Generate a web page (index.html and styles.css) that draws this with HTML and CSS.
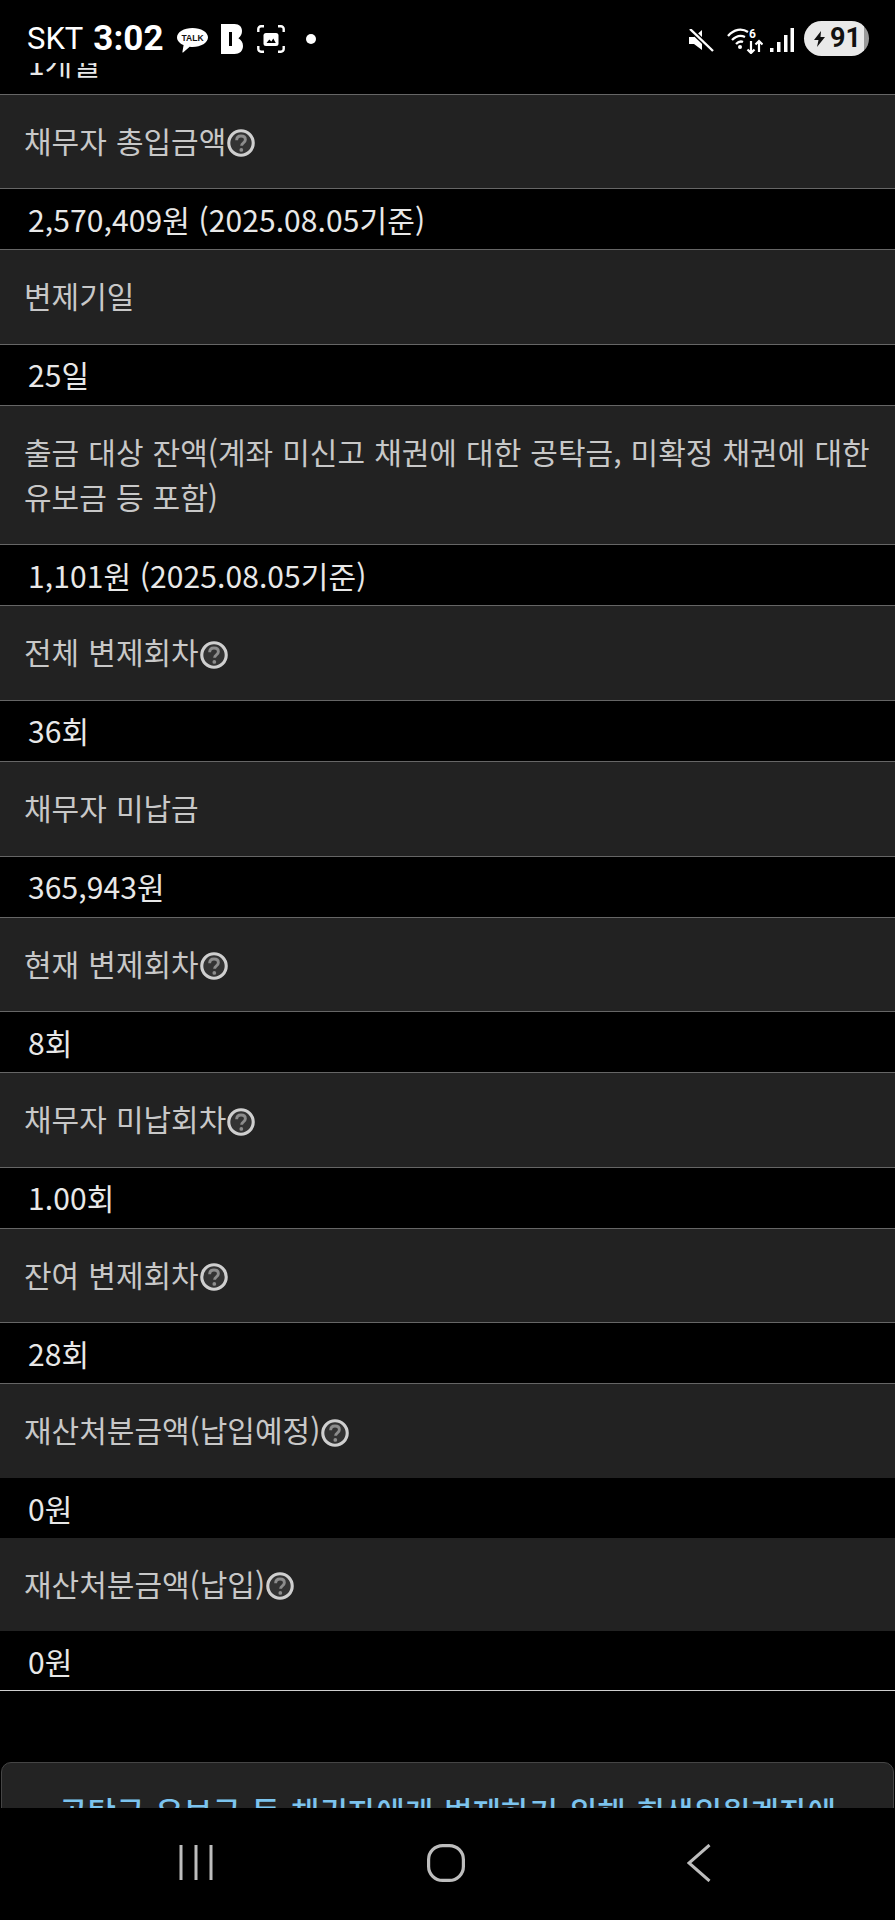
FILE: index.html
```html
<!DOCTYPE html>
<html lang="ko">
<head>
<meta charset="utf-8">
<title>변제 정보</title>
<link rel="stylesheet" href="styles.css">
</head>
<body>
<svg class="defs" width="0" height="0" aria-hidden="true">
  <symbol id="help" viewBox="0 0 27 27">
    <circle cx="13.5" cy="13.5" r="11.800" fill="#333" stroke="#cfcfcf" stroke-width="3"/>
    <path d="M9.300 10.800c0-2.500 1.800-4 4.200-4 2.500 0 4.200 1.400 4.200 3.500 0 1.700-1 2.500-2.100 3.300-1.100.8-1.500 1.300-1.500 2.600" fill="none" stroke="#8c8c8c" stroke-width="2.800"/>
    <circle cx="13.800" cy="20.200" r="1.800" fill="#8c8c8c"/>
  </symbol>
</svg>
<div class="phone">
  <header class="status">
    <span class="carrier">SKT</span>
    <span class="clock">3:02</span>
    <svg class="ic-talk" viewBox="0 0 31 25" aria-hidden="true">
      <path d="M15.5 0C7 0 0 4.1 0 9.3c0 3.4 2.6 6.2 6.6 7.8L5.4 24c-.1.5.3.7.7.4l6.6-5.6c.9.1 1.9.2 2.8.2 8.5 0 15.5-4.3 15.5-9.7C31 4.1 24 0 15.5 0z" fill="#fff"/>
      <text x="15.5" y="13" class="talk-text">TALK</text>
    </svg>
    <svg class="ic-b" viewBox="0 0 22 30" aria-hidden="true">
      <path d="M0 0h13.5C18.5 0 21 3 21 7c0 3-1.2 5.500-3.600 7.200C20.300 15.800 22 18.500 22 22c0 5-3.500 8-8.500 8H0z" fill="#fff"/>
      <rect x="8" y="8" width="3" height="14" fill="#000"/>
    </svg>
    <svg class="ic-shot" viewBox="0 0 28 28" aria-hidden="true">
      <path d="M1.300 7V4a2.700 2.700 0 0 1 2.700-2.700h3M21 1.300h3A2.700 2.700 0 0 1 26.700 4v3M26.700 21v3a2.700 2.700 0 0 1-2.700 2.700h-3M7 26.700H4A2.700 2.700 0 0 1 1.300 24v-3" fill="none" stroke="#fff" stroke-width="2.400"/>
      <rect x="6.500" y="8" width="15" height="13" rx="2.500" fill="#fff"/>
      <path d="M9.500 18l2.800-3.500 2 2 2-3 2.500 4.500z" fill="#000"/>
    </svg>
    <span class="dot"></span>
    <div class="status-right">
      <svg class="ic-mute" viewBox="0 0 25 23" aria-hidden="true">
        <path d="M0 7h5l8-7v20l-8-6H0z" fill="#fff" transform="translate(0 1)"/>
        <path d="M2 1l22 21" stroke="#000" stroke-width="5"/>
        <path d="M1 0l23 22" stroke="#fff" stroke-width="2.400"/>
      </svg>
      <svg class="ic-wifi" viewBox="0 0 36 27" aria-hidden="true">
        <g fill="none" stroke="#fff" stroke-width="2.300">
          <path d="M1 9C7 2 15 1 21 5"/>
          <path d="M5 13c4-4 9-5 13-3"/>
          <path d="M9 17c2-2 5-3 7-2"/>
        </g>
        <circle cx="13" cy="20" r="2" fill="#fff"/>
        <text x="22" y="10.500" class="wifi-six">6</text>
        <path d="M24 14v12M20.500 22.500l3.500 3.500 3.500-3.500M32 25V14M28.500 17.500L32 14l3.500 3.500" fill="none" stroke="#fff" stroke-width="2.200"/>
      </svg>
      <svg class="ic-signal" viewBox="0 0 24 24" aria-hidden="true">
        <rect x="0" y="20" width="3.500" height="4" fill="#fff"/>
        <rect x="7" y="14" width="3.500" height="10" fill="#fff"/>
        <rect x="14" y="7" width="3.500" height="17" fill="#fff"/>
        <rect x="20.500" y="0" width="3.500" height="24" fill="#fff"/>
      </svg>
      <div class="battery">
        <svg class="ic-bolt" viewBox="0 0 13 16" aria-hidden="true"><path d="M8 0L1 9h4.500L4 16l8-10H7.500z" fill="#111"/></svg>
        <span class="battery-num">91</span>
      </div>
    </div>
  </header>

  <main class="content">
    <div class="td partial">1개월</div>

    <div class="th line">채무자 총입금액<svg class="help"><use href="#help"/></svg></div>
    <div class="td line">2,570,409원 (2025.08.05기준)</div>

    <div class="th line">변제기일</div>
    <div class="td line">25일</div>

    <div class="th line">출금 대상 잔액(계좌 미신고 채권에 대한 공탁금, 미확정 채권에 대한 유보금 등 포함)</div>
    <div class="td line">1,101원 (2025.08.05기준)</div>

    <div class="th line">전체 변제회차<svg class="help"><use href="#help"/></svg></div>
    <div class="td line">36회</div>

    <div class="th line">채무자 미납금</div>
    <div class="td line">365,943원</div>

    <div class="th line">현재 변제회차<svg class="help"><use href="#help"/></svg></div>
    <div class="td line">8회</div>

    <div class="th line">채무자 미납회차<svg class="help"><use href="#help"/></svg></div>
    <div class="td line">1.00회</div>

    <div class="th line">잔여 변제회차<svg class="help"><use href="#help"/></svg></div>
    <div class="td line">28회</div>

    <div class="th line">재산처분금액(납입예정)<svg class="help"><use href="#help"/></svg></div>
    <div class="td">0원</div>

    <div class="th">재산처분금액(납입)<svg class="help"><use href="#help"/></svg></div>
    <div class="td last">0원</div>

    <section class="notice">공탁금 유보금 등 채권자에게 변제하기 위해 회생위원계좌에</section>
  </main>

  <nav class="navbar">
    <svg class="ic-recent" viewBox="0 0 36 37" aria-hidden="true">
      <path d="M3 1v35M18 1v35M33 1v35" stroke="#bdbdbd" stroke-width="3" fill="none"/>
    </svg>
    <svg class="ic-home" viewBox="0 0 38 38" aria-hidden="true">
      <rect x="1.600" y="1.600" width="34.800" height="34.800" rx="14" fill="none" stroke="#bdbdbd" stroke-width="3.200"/>
    </svg>
    <svg class="ic-back" viewBox="0 0 24 38" aria-hidden="true">
      <path d="M22.500 1L2 19l20.500 18" fill="none" stroke="#bdbdbd" stroke-width="3"/>
    </svg>
  </nav>
</div>
</body>
</html>
```
FILE: styles.css
```css
* { box-sizing: border-box; }
html, body { margin: 0; padding: 0; background: #000; }
.defs { display: block; height: 0; }
.phone {
  width: 895px;
  height: 1920px;
  display: flex;
  flex-direction: column;
  overflow: hidden;
  background: #000;
  font-family: "Noto Sans CJK KR", "Noto Sans", sans-serif;
}
.status {
  height: 63px;
  flex: none;
  display: flex;
  align-items: flex-start;
  padding: 0 26px 0 27px;
  color: #fff;
  font-family: Roboto, "Liberation Sans", sans-serif;
}
.carrier { font-size: 31px; line-height: 36px; margin-top: 21px; }
.clock { font-size: 35px; line-height: 36px; margin: 21px 0 0 10px; font-weight: 700; }
.ic-talk { width: 31px; height: 25px; margin: 28px 0 0 14px; }
.talk-text { font: 700 8.500px "Liberation Sans", sans-serif; text-anchor: middle; fill: #111; }
.ic-b { width: 22px; height: 30px; margin: 24px 0 0 13px; }
.ic-shot { width: 28px; height: 28px; margin: 25px 0 0 14px; }
.dot { width: 10px; height: 10px; border-radius: 50%; background: #fff; margin: 34px 0 0 21px; }
.status-right { margin-left: auto; display: flex; align-items: flex-start; }
.ic-mute { width: 25px; height: 23px; margin-top: 29px; }
.ic-wifi { width: 36px; height: 27px; margin: 27px 0 0 13px; }
.wifi-six { font: 700 12px Roboto, sans-serif; fill: #fff; }
.ic-signal { width: 24px; height: 24px; margin: 28px 0 0 7px; }
.battery {
  width: 65px;
  height: 35px;
  margin: 21px 0 0 10px;
  border-radius: 18px;
  display: flex;
  align-items: center;
  padding-left: 9px;
  background: linear-gradient(90deg, #e9e9e9 0, #e9e9e9 92%, #9a9a9a 92%, #9a9a9a 100%);
}
.ic-bolt { width: 13px; height: 16px; }
.battery-num { font-size: 27px; line-height: 35px; font-weight: 700; color: #111; margin-left: 4px; }

.content {
  flex: 1;
  min-height: 0;
  overflow: hidden;
  font-size: 30px;
}
.th {
  min-height: 93.300px;
  padding: 23px 15px 25px 24px;
  line-height: 45.300px;
  background: #222;
  color: #c8c8c8;
  word-spacing: 0.7px;
}
.td {
  height: 59.800px;
  padding: 7.500px 0 0 28px;
  line-height: 45px;
  color: #e8e8e8;
  letter-spacing: 0.1px;
}
.line { border-top: 1.330px solid #666; }
.line.th { min-height: 94.630px; }
.line.td { height: 61px; }
.partial {
  height: 30.500px;
  padding: 0 0 9px 28px;
  display: flex;
  align-items: flex-end;
  overflow: hidden;
}
.last { border-bottom: 1.330px solid #d0d0d0; height: 60px; }
.help {
  width: 28px;
  height: 28px;
  vertical-align: -4.500px;
  margin-left: 1px;
}
.notice {
  margin: 71px 1px 0;
  height: 200px;
  padding: 25px 0;
  background: #232323;
  border: 1.500px solid #454545;
  border-radius: 10px;
  text-align: center;
  color: #7cc4ee;
  font-weight: 500;
  font-size: 31px;
  word-spacing: 2px;
  line-height: 45px;
  white-space: nowrap;
}
.navbar {
  height: 112px;
  flex: none;
  display: grid;
  grid-template-columns: 178px 36px 213px 38px 222px 24px;
  align-items: start;
  background: #000;
  padding-top: 36px;
}
.ic-recent { grid-column: 2; width: 36px; height: 37px; }
.ic-home { grid-column: 4; width: 38px; height: 38px; }
.ic-back { grid-column: 6; width: 24px; height: 38px; }
```
